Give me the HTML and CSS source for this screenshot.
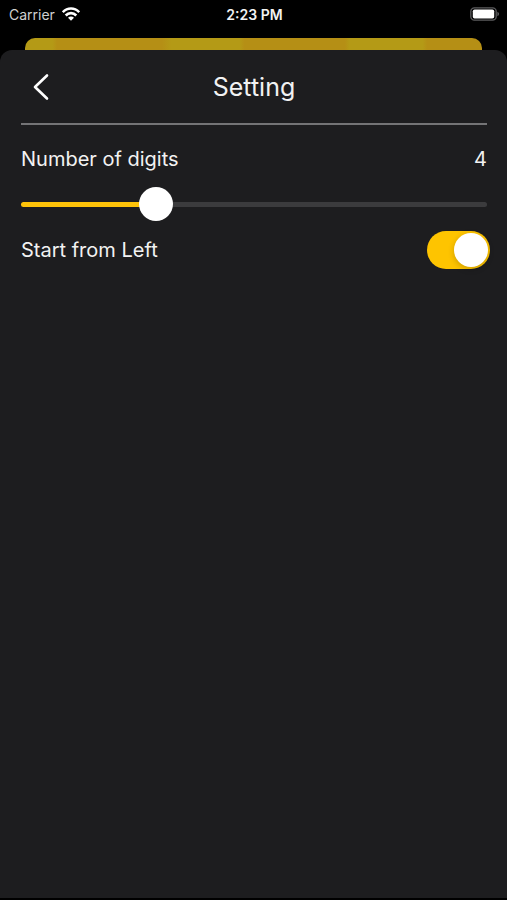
FILE: index.html
```
<!DOCTYPE html>
<html lang="en">
<head>
    <meta charset="UTF-8">
    <meta name="viewport" content="width=device-width, initial-scale=1">
    <title>Setting</title>
    <link rel="stylesheet" href="styles.css">
</head>
<body>
    <div class="status-bar">
        <div class="carrier">
            <span>Carrier</span>
            <svg width="18" height="14" viewBox="0 0 18 14" fill="none" stroke="#fff" stroke-width="2.6">
                <path d="M0.8 5.2 C5.4 0.3 12.6 0.3 17.2 5.2"/>
                <path d="M3.7 8.5 C6.7 5.3 11.3 5.3 14.3 8.5"/>
                <path d="M9 13.8 L6 10.8 C7.7 9.2 10.3 9.2 12 10.8 Z" fill="#fff" stroke="none"/>
            </svg>
        </div>
        <span class="time">2:23 PM</span>
        <svg class="battery" width="30" height="14" viewBox="0 0 30 14">
            <rect x="0.8" y="0.8" width="25.4" height="12.4" rx="3.6" fill="none" stroke="#5c5c5e" stroke-width="1.3"/>
            <rect x="2.8" y="2.4" width="21.4" height="9.2" rx="1.8" fill="#fff"/>
            <path d="M27.4 4.8 C29.6 5.6 29.6 8.4 27.4 9.2 Z" fill="#5c5c5e"/>
        </svg>
    </div>

    <div class="page-behind"></div>

    <main class="sheet">
        <header class="sheet-header">
            <button class="back-button" aria-label="Back">
                <svg width="16" height="28" viewBox="0 0 16 28" fill="none" stroke="#fff" stroke-width="2.6" stroke-linecap="round" stroke-linejoin="round">
                    <path d="M14 2.5 L2 14 L14 25.5"/>
                </svg>
            </button>
            <h1>Setting</h1>
        </header>

        <div class="row">
            <label for="digits">Number of digits</label>
            <output id="digitsValue" for="digits">4</output>
        </div>
        <input type="range" id="digits" class="slider" min="1" max="12" value="4">

        <div class="row switch-row">
            <label for="startLeft">Start from Left</label>
            <input type="checkbox" id="startLeft" class="switch" checked>
        </div>
    </main>

    <script>
        const digits = document.getElementById('digits');

        function updateDigits() {
            const percent = (digits.value - digits.min) / (digits.max - digits.min) * 100;
            digits.style.setProperty('--fill', percent + '%');
            document.getElementById('digitsValue').textContent = digits.value;
        }

        digits.addEventListener('input', updateDigits);
        updateDigits();
    </script>
</body>
</html>
```

FILE: styles.css
```
* {
    box-sizing: border-box;
}

body {
    display: flex;
    flex-direction: column;
    min-height: 100vh;
    margin: 0;
    padding-bottom: 2px;
    background-color: #000;
    color: #f2f2f2;
    font-family: Inter, Roboto, sans-serif;
}

.status-bar {
    display: grid;
    grid-template-columns: 1fr auto 1fr;
    align-items: center;
    height: 28px;
    padding: 0 7px 0 9px;
    font-size: 14px;
}

.carrier {
    display: flex;
    align-items: center;
    gap: 7px;
    color: #d0d0d0;
}

.time {
    font-weight: 600;
}

.battery {
    justify-self: end;
}

.page-behind {
    height: 12px;
    margin: 10px 25px 0;
    border-radius: 10px 10px 0 0;
    background: linear-gradient(90deg, #b49a16 0%, #b49a16 6%, #b58f15 7%, #b58f15 30%, #b49a16 32%, #b49a16 47%, #b58f15 48%, #b58f15 70%, #b49a16 71%, #b49a16 87%, #b58f15 88%);
}

.sheet {
    flex: 1;
    padding: 0 20px 0 21px;
    border-radius: 12px 12px 0 0;
    background-color: #1d1d1f;
}

.sheet-header {
    display: grid;
    grid-template-columns: 40px 1fr 40px;
    align-items: center;
    height: 75px;
    border-bottom: 2px solid #747476;
}

.back-button {
    display: flex;
    align-items: center;
    justify-content: center;
    height: 40px;
    padding: 0;
    border: none;
    background: none;
    cursor: pointer;
}

h1 {
    margin: 0;
    font-size: 25px;
    font-weight: 400;
    text-align: center;
}

.row {
    display: flex;
    justify-content: space-between;
    align-items: center;
    padding: 20px 0 14px;
    font-size: 20px;
    line-height: 28px;
}

.slider {
    --fill: 0%;
    display: block;
    width: 100%;
    height: 34px;
    margin: 0;
    background: none;
    appearance: none;
    cursor: pointer;
}

.slider::-webkit-slider-runnable-track {
    height: 5px;
    border-radius: 3px;
    background: linear-gradient(90deg, #fec309 var(--fill), #3b3b3d var(--fill));
}

.slider::-webkit-slider-thumb {
    width: 34px;
    height: 34px;
    margin-top: -15px;
    border-radius: 50%;
    background: #fff;
    appearance: none;
}

.switch-row {
    padding: 10px 0;
}

.switch {
    display: flex;
    align-items: center;
    justify-content: flex-end;
    width: 63px;
    height: 38px;
    margin: 0 -3px 0 0;
    padding: 2px;
    border-radius: 19px;
    background-color: #3b3b3d;
    appearance: none;
    cursor: pointer;
}

.switch::before {
    content: "";
    width: 34px;
    height: 34px;
    border-radius: 50%;
    background: #fff;
    box-shadow: 0 2px 6px rgba(0, 0, 0, 0.2);
}

.switch:checked {
    background-color: #fec400;
}

.switch:not(:checked) {
    justify-content: flex-start;
}
```
